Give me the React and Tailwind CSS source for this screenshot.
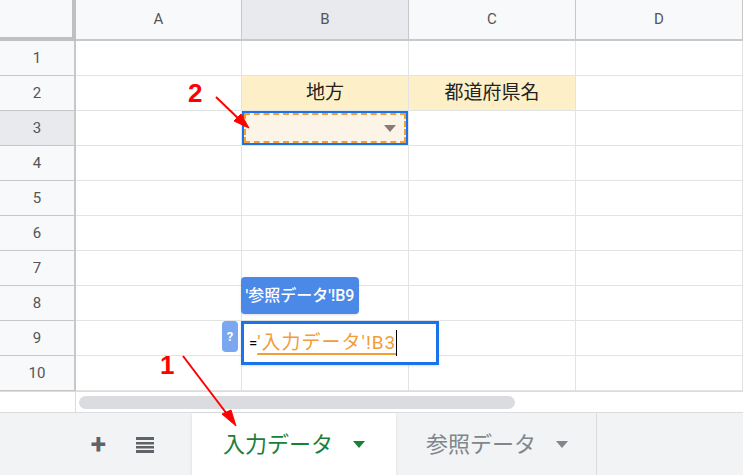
const cols = [
  { k: "A", w: "w-[166px]" },
  { k: "B", w: "w-[167px]" },
  { k: "C", w: "w-[167px]" },
  { k: "D", w: "flex-1" },
];
const font = { fontFamily: '"Roboto","Noto Sans CJK JP",sans-serif' };

function Cell({ r, c, w }) {
  let cls = `${w} h-full border-r border-b border-[#e2e3e3] flex items-center justify-center text-[19px] text-[#222]`;
  let content = null;
  if (r === 2 && (c === "B" || c === "C")) {
    cls += " bg-[#fdf0c8]";
    content = c === "B" ? "地方" : "都道府県名";
  }
  if (r === 3 && c === "B") {
    return (
      <div className={`${w} h-full border-r border-b border-[#e2e3e3]`}>
        <div className="h-full border-2 border-[#1a73e8]">
          <div className="h-full border-2 border-dashed border-[#f29d38] bg-[#fdf4e8] flex items-center justify-end pr-2">
            <svg width="12" height="7"><path d="M0 0h12L6 7z" fill="#8a7a78" /></svg>
          </div>
        </div>
      </div>
    );
  }
  return <div className={cls}>{content}</div>;
}

export default function App() {
  return (
    <div className="relative w-[743px] h-[475px] overflow-hidden bg-white" style={font}>
      <div className="flex h-[41px] bg-[#f8f9fa]">
        <div className="w-[76px] h-full border-r-4 border-b-4 border-[#c0c0c0]" />
        {cols.map((c) => (
          <div
            key={c.k}
            className={`${c.w} h-full border-r border-b-2 border-[#c8c8c8] flex items-center justify-center text-[15px] text-[#555] ${c.k === "B" ? "bg-[#e8eaed]" : ""}`}
          >
            {c.k}
          </div>
        ))}
      </div>
      {Array.from({ length: 10 }, (_, i) => i + 1).map((r) => (
        <div key={r} className="flex h-[35px]">
          <div className={`w-[76px] h-full border-r-2 border-b border-[#c8c8c8] flex items-center justify-center text-[15px] text-[#555] ${r === 3 ? "bg-[#e8eaed]" : "bg-[#f8f9fa]"}`}>
            {r}
          </div>
          {cols.map((c) => (
            <Cell key={c.k} r={r} c={c.k} w={c.w} />
          ))}
        </div>
      ))}
      <div className="flex h-[21px] border-t border-[#dadce0]">
        <div className="w-[76px] border-r border-[#dadce0]" />
        <div className="flex-1 flex items-center pl-[3px]">
          <div className="w-[436px] h-[13px] rounded-full bg-[#dadce0]" />
        </div>
      </div>
      <div className="flex h-[64px] bg-[#f1f3f4] border-t border-[#dadce0]">
        <div className="w-[192px] flex items-center justify-end gap-[30px] pr-[38px] text-[#5f6368]">
          <span className="text-[28px] font-bold leading-none">+</span>
          <svg width="18" height="16"><g fill="#5f6368"><rect y="0" width="18" height="3" /><rect y="5" width="18" height="2.5" /><rect y="9" width="18" height="2.5" /><rect y="13" width="18" height="3" /></g></svg>
        </div>
        <div className="w-[204px] bg-white flex items-center justify-center gap-5 text-[22px] text-[#188038] shadow">
          入力データ
          <svg width="12" height="7"><path d="M0 0h12L6 7z" fill="#188038" /></svg>
        </div>
        <div className="w-[199px] ml-[2px] flex items-center justify-center gap-5 text-[22px] text-[#80868b] border-r border-[#dadce0]">
          参照データ
          <svg width="12" height="7"><path d="M0 0h12L6 7z" fill="#80868b" /></svg>
        </div>
      </div>

      {/* overlays */}
      <div className="absolute left-[241px] top-[277px] w-[118px] h-[37px] rounded-sm bg-[#4a89e8] text-white text-[16px] font-medium flex items-center justify-center shadow">
        '参照データ'!B9
      </div>
      <div className="absolute left-[222px] top-[321px] w-[16px] h-[31px] rounded-sm bg-[#7aa7f0] text-white text-[13px] font-bold flex items-center justify-center">
        ?
      </div>
      <div className="absolute left-[241px] top-[321px] w-[198px] h-[44px] border-[3px] border-[#1a73e8] bg-white flex items-center pl-[5px] text-[19px] shadow">
        <span className="text-black text-[15px]">=</span>
        <span className="text-[#f29d38] underline decoration-2 underline-offset-4 tracking-[1px]">'入力データ'!B3</span>
        <span className="w-[1px] h-[26px] bg-black" />
      </div>
      <svg className="absolute left-0 top-0" width="743" height="475">
        <g stroke="#ff0000" strokeWidth="2" fill="#ff0000">
          <line x1="183" y1="356" x2="230" y2="418" />
          <path d="M236 426 L222 414 L231 410 Z" strokeWidth="1" />
          <line x1="216" y1="97" x2="242" y2="122" />
          <path d="M249 128 L234 121 L241 114 Z" strokeWidth="1" />
        </g>
      </svg>
      <div className="absolute left-[188px] top-[74px] text-[26px] font-bold text-[#ff0000]" style={{ fontFamily: '"Liberation Sans",sans-serif' }}>2</div>
      <div className="absolute left-[160px] top-[346px] text-[26px] font-bold text-[#ff0000]" style={{ fontFamily: '"Liberation Sans",sans-serif' }}>1</div>
    </div>
  );
}
